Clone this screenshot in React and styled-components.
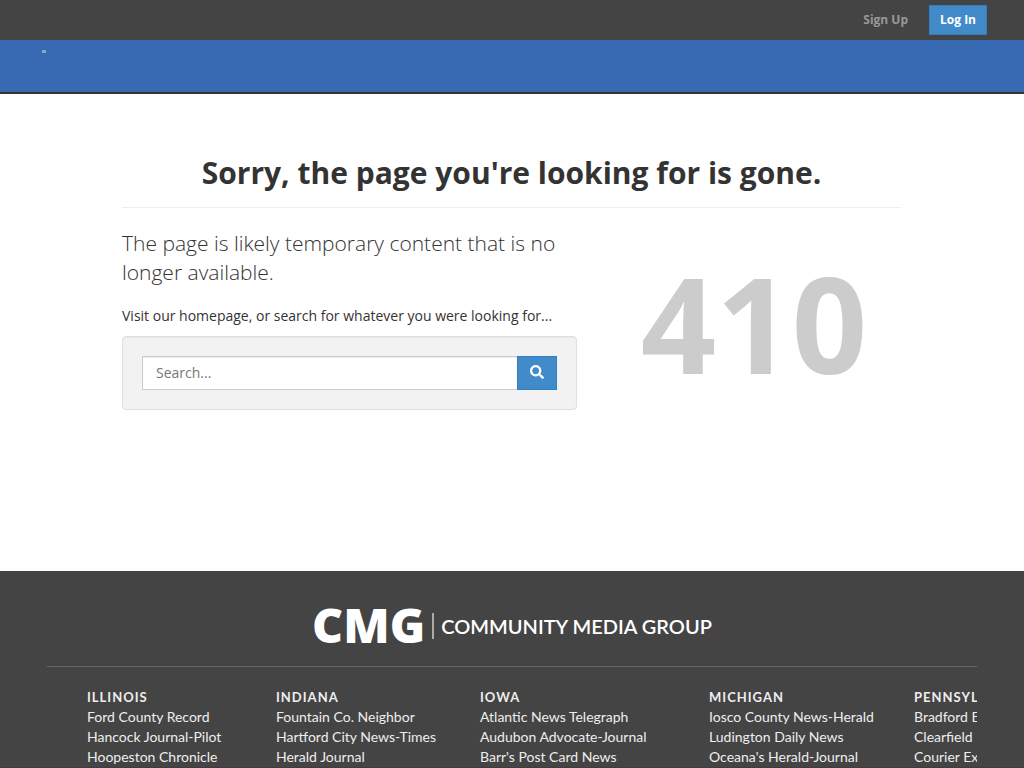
import React from "react";
import styled, { createGlobalStyle } from "styled-components";
import { FaSearch } from "react-icons/fa";

const GlobalStyle = createGlobalStyle`
  *, *::before, *::after { box-sizing: border-box; }
  body {
    margin: 0;
    background: #fff;
    color: #333;
    font-family: "Open Sans", "Noto Sans", sans-serif;
    font-size: 14px;
    line-height: 20px;
  }
`;

const TopBar = styled.nav`
  display: flex;
  align-items: center;
  justify-content: flex-end;
  gap: 10px;
  height: 40px;
  padding: 0 37px;
  background: #444;
`;

const AccountLink = styled.a`
  padding: 5px 10px;
  border: 1px solid ${(p) => (p.$primary ? "#357ebd" : "transparent")};
  background: ${(p) => (p.$primary ? "#428bca" : "transparent")};
  color: ${(p) => (p.$primary ? "#fff" : "#999")};
  font-size: 12px;
  line-height: 18px;
  font-weight: 700;
  text-decoration: none;
`;

const Masthead = styled.header`
  height: 54px;
  padding: 10px 42px;
  background: #376ab3;
  border-bottom: 2px solid #333;
`;

const MastheadMark = styled.div`
  width: 4px;
  height: 3px;
  background: #7fa8c9;
`;

const Main = styled.main`
  min-height: 477px;
  padding: 60px 123px 0 122px;
`;

const Title = styled.h1`
  margin: 0 0 21px;
  padding-bottom: 15px;
  border-bottom: 1px solid #eee;
  font-size: 30px;
  line-height: 38px;
  font-weight: 700;
  text-align: center;
`;

const Columns = styled.div`
  display: grid;
  grid-template-columns: 455fr 294fr;
  column-gap: 30px;
`;

const Lead = styled.p`
  margin: 0 0 19px;
  font-size: 21px;
  line-height: 29px;
  font-weight: 300;
`;

const Hint = styled.p`
  margin: 0 0 10px;
`;

const SearchWell = styled.form`
  display: flex;
  padding: 19px;
  background: #f2f2f2;
  border: 1px solid #e0e0e0;
  border-radius: 4px;
  box-shadow: inset 0 1px 1px rgba(0, 0, 0, 0.05);
`;

const SearchInput = styled.input`
  flex: 1;
  min-width: 0;
  height: 34px;
  padding: 5px 13px 7px;
  border: 1px solid #ccc;
  border-right: 0;
  border-radius: 0;
  box-shadow: inset 0 1px 1px rgba(0, 0, 0, 0.075);
  color: #555;
  font: inherit;
  &::placeholder { color: #777; opacity: 1; }
`;

const SearchButton = styled.button`
  display: flex;
  align-items: flex-start;
  justify-content: center;
  width: 40px;
  height: 34px;
  padding: 8px 0;
  border: 1px solid #357ebd;
  background: #428bca;
  color: #fff;
  font-size: 14px;
`;

const ErrorCode = styled.div`
  padding-top: 19px;
  color: #ccc;
  font-size: 132px;
  line-height: 150px;
  font-weight: 700;
  text-align: center;
`;

const Footer = styled.footer`
  padding: 29px 47px 0;
  background: #444;
  border-bottom: 1px solid #403b3e;
  color: #eee;
  font-family: Lato, "Open Sans", sans-serif;
`;

const Brand = styled.div`
  display: flex;
  align-items: center;
  justify-content: center;
  gap: 7px;
  height: 52px;
  color: #fff;
`;

const BrandShort = styled.span`
  padding-bottom: 2px;
  font-family: "Open Sans", sans-serif;
  font-size: 48px;
  line-height: 50px;
  font-weight: 800;
`;

const BrandRule = styled.span`
  width: 2px;
  height: 26px;
  background: #aaa;
`;

const BrandName = styled.span`
  font-size: 20px;
  line-height: 24px;
  font-weight: 600;
`;

const Directory = styled.div`
  display: grid;
  grid-template-columns: 189fr 204fr 229fr 205fr 63fr;
  margin-top: 14px;
  padding: 20px 0 0 40px;
  border-top: 1px solid #666;
  overflow: hidden;
`;

const State = styled.section`
  min-width: 0;
  white-space: nowrap;
`;

const StateName = styled.h2`
  margin: 0;
  font-size: 13px;
  line-height: 20px;
  font-weight: 700;
  letter-spacing: 1px;
  text-transform: uppercase;
`;

const Papers = styled.ul`
  margin: 0;
  padding: 0;
  list-style: none;
`;

const PaperLink = styled.a`
  color: #eee;
  text-decoration: none;
`;

const states = [
  ["Illinois", ["Ford County Record", "Hancock Journal-Pilot", "Hoopeston Chronicle"]],
  ["Indiana", ["Fountain Co. Neighbor", "Hartford City News-Times", "Herald Journal"]],
  ["Iowa", ["Atlantic News Telegraph", "Audubon Advocate-Journal", "Barr's Post Card News"]],
  ["Michigan", ["Iosco County News-Herald", "Ludington Daily News", "Oceana's Herald-Journal"]],
  ["Pennsylvania", ["Bradford Era", "Clearfield Progress", "Courier Express"]],
];

export default function App() {
  return (
    <>
      <GlobalStyle />
      <TopBar>
        <AccountLink href="#signup">Sign Up</AccountLink>
        <AccountLink href="#login" $primary>Log In</AccountLink>
      </TopBar>
      <Masthead>
        <MastheadMark />
      </Masthead>
      <Main>
        <Title>Sorry, the page you're looking for is gone.</Title>
        <Columns>
          <div>
            <Lead>The page is likely temporary content that is no longer available.</Lead>
            <Hint>Visit our homepage, or search for whatever you were looking for...</Hint>
            <SearchWell role="search">
              <SearchInput type="text" aria-label="Search" placeholder="Search..." />
              <SearchButton type="button" aria-label="Submit search">
                <FaSearch aria-hidden="true" />
              </SearchButton>
            </SearchWell>
          </div>
          <ErrorCode>410</ErrorCode>
        </Columns>
      </Main>
      <Footer>
        <Brand>
          <BrandShort>CMG</BrandShort>
          <BrandRule />
          <BrandName>COMMUNITY MEDIA GROUP</BrandName>
        </Brand>
        <Directory>
          {states.map(([name, papers]) => (
            <State key={name}>
              <StateName>{name}</StateName>
              <Papers>
                {papers.map((paper) => (
                  <li key={paper}>
                    <PaperLink href="#paper">{paper}</PaperLink>
                  </li>
                ))}
              </Papers>
            </State>
          ))}
        </Directory>
      </Footer>
    </>
  );
}
